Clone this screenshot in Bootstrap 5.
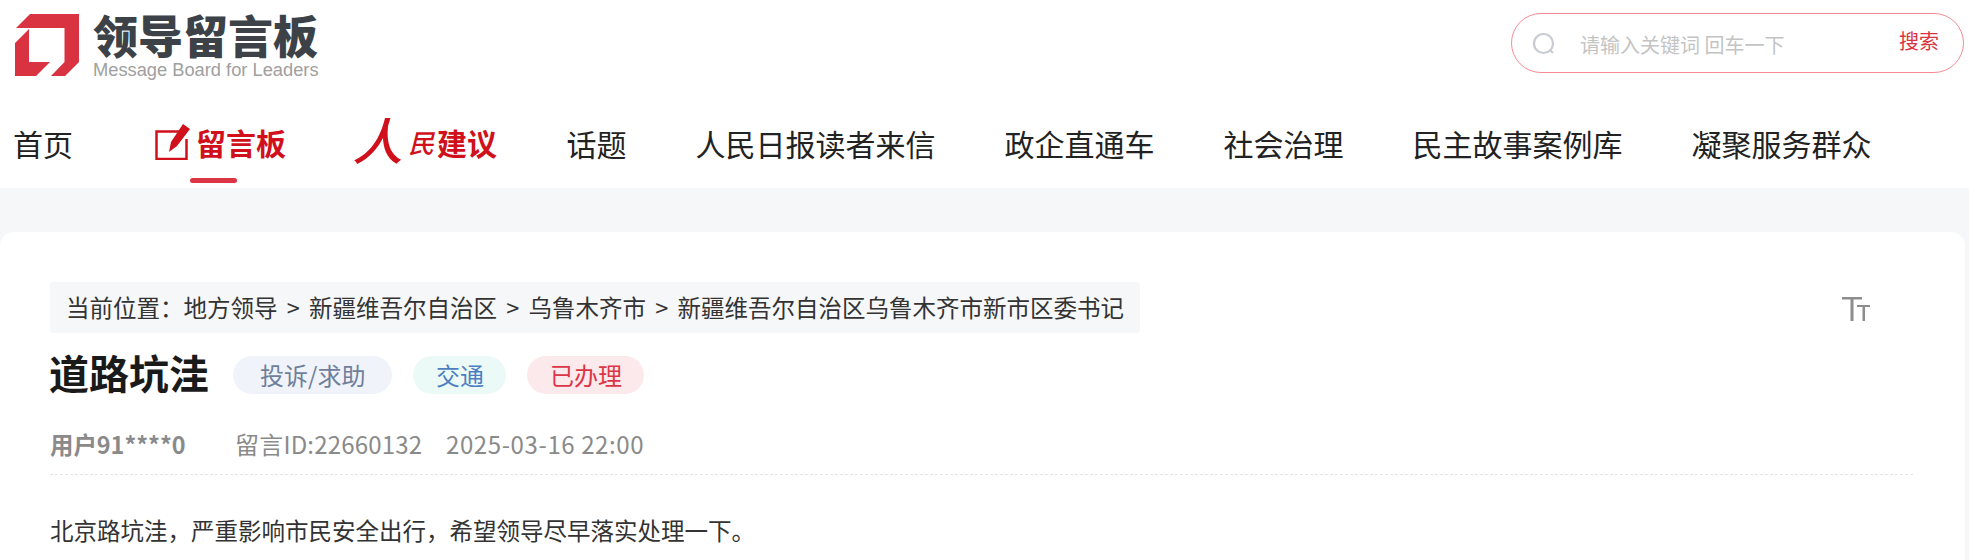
<!DOCTYPE html>
<html lang="zh"><head><meta charset="utf-8">
<link href="https://cdn.jsdelivr.net/npm/bootstrap@5.3.0/dist/css/bootstrap.min.css" rel="stylesheet">
<style>
html,body{height:560px;overflow:hidden}
body{background:#f6f7f9;font-family:"Noto Sans CJK SC","Liberation Sans",sans-serif;color:#222}
.top-wrap{background:#fff;height:188px}
.brand-row{height:88px;padding:14px 5px 0 15px}
.brand-icon{width:64px;height:63px;flex:none}
.brand-text{margin-left:14px;width:232px}
.brand-cn{font-size:45px;height:44px;line-height:44px;font-weight:900;color:#3d4248;margin-top:-1px;white-space:nowrap}
.brand-en{font-family:"Liberation Sans",sans-serif;font-size:18.300px;line-height:20px;color:#a0a0a0;white-space:nowrap;margin-top:3px}
.search-pill{width:453px;height:60px;margin-top:-1px;border:1px solid #f58a94;border-radius:30px;padding:0 24px 0 20px}
.search-ico{margin-top:2px}
.search-input{border:0;outline:0;background:transparent;flex:1;margin:3px 0 0 22px;font-size:20px;color:#333;min-width:0}
.search-input::placeholder{color:#c4c4c4}
.search-go{color:#d83442;font-size:20px;margin-bottom:4px}
.main-nav{gap:69px;padding:0 0 0 13px;height:100px;align-items:flex-start}
.nav-txt{font-size:30px;line-height:40px;margin-top:35px;color:#222;text-decoration:none;white-space:nowrap}
.nav-logo{width:130px;margin-top:34px;margin-left:13px;height:66px;text-decoration:none;white-space:nowrap}
.nav-lm{color:#d0111c;font-size:30px;line-height:40px;font-weight:700}
.pen-mark{width:35px;height:36px;flex:none;margin-right:6px}
.active-mark{display:block;width:47px;height:5px;border-radius:3px;background:#dc3545;margin:16px 0 0 35px}
.jy-logo{width:139.500px;height:40px;margin-left:4px}
.jy-ren{display:inline-block;font-size:50px;font-weight:500;line-height:40px;transform:skewX(-14deg);margin:0 5px 8px 0;width:48px}
.jy-min{display:inline-block;font-size:26px;font-weight:500;transform:skewX(-14deg);width:26px;flex:none}
.jy-rest{font-size:30px}
.board{background:#fff;margin:44px 4px 0 0;height:328px;border-radius:14px 14px 0 0;padding:50px 52px 0 50px}
.crumb{height:51px;line-height:51px;background:#f6f7f9;border-radius:3px;padding:0 16px;font-size:23.500px;color:#333;width:1090px;white-space:nowrap}
.crumb-sep{display:inline-block;width:31.500px;text-align:center}
.font-tool{width:32px;height:32px;margin-right:41px;margin-top:13px}
.ttl{font-size:40px;line-height:56px;font-weight:700;color:#1a1a1a;margin:0 0 0 -1px}
.tag-pill{height:38px;line-height:38px;border-radius:19px;padding:0 22.500px;font-size:24px;margin-top:6px}
.tag-a{background:#f0f3f9;color:#6f7f9b;padding:0 27px}
.tag-b{background:#ecfaf7;color:#4d7fc0}
.tag-c{background:#fbe9eb;color:#dc3545}
.ttl-row{margin-top:11px;gap:24px}
.tags{gap:21px}
.meta{margin-top:29px;font-size:24px;line-height:30px;color:#8a8a8a;padding-bottom:15px;border-bottom:1px dashed #e4e4e4;margin-right:0;white-space:nowrap}
.meta-u{font-weight:700;width:185px;font-size:23.400px}
.meta-i{width:211px;letter-spacing:.2px}
.meta-d{letter-spacing:.6px}
.msg{margin-top:38px;font-size:23.500px;line-height:34px;color:#333;white-space:nowrap}
</style></head>
<body>
<header class="top-wrap">
  <div class="brand-row d-flex justify-content-between">
    <div class="d-flex">
      <svg class="brand-icon" viewBox="0 0 64 63" aria-hidden="true"><path fill="#d93240" d="M15 0H64V48L50 62H36L49.500 48V14H1ZM0 29L14 15V48H35L21 62H0Z"/></svg>
      <div class="brand-text"><div class="brand-cn">领导留言板</div><div class="brand-en">Message Board for Leaders</div></div>
    </div>
    <div class="search-pill d-flex align-items-center">
      <svg class="search-ico" width="24" height="24" viewBox="0 0 24 24" fill="none" stroke="#c8ccd1" stroke-width="2.200" aria-hidden="true"><circle cx="11.500" cy="11.500" r="9.500"/><path d="M18 18l3 3"/></svg>
      <input class="search-input" placeholder="请输入关键词 回车一下">
      <span class="search-go">搜索</span>
    </div>
  </div>
  <nav class="main-nav d-flex">
    <a class="nav-txt" href="#">首页</a>
    <a class="nav-logo" href="#"><span class="d-flex align-items-center nav-lm"><svg class="pen-mark" viewBox="0 0 35 36" fill="none" aria-hidden="true"><path d="M25 7.500H1.500V35H31.500V15" stroke="#d0111c" stroke-width="2.500"/><path fill="#d0111c" d="M28 0L35 5L22 22L14 28L16 18Z"/></svg>留言板</span><span class="active-mark"></span></a>
    <a class="nav-logo jy-logo d-flex align-items-center" href="#"><span class="nav-lm jy-ren">人</span><span class="nav-lm jy-min">民</span><span class="nav-lm jy-rest">建议</span></a>
    <a class="nav-txt" href="#">话题</a>
    <a class="nav-txt" href="#">人民日报读者来信</a>
    <a class="nav-txt" href="#">政企直通车</a>
    <a class="nav-txt" href="#">社会治理</a>
    <a class="nav-txt" href="#">民主故事案例库</a>
    <a class="nav-txt" href="#">凝聚服务群众</a>
  </nav>
</header>
<main class="board">
  <div class="d-flex justify-content-between">
    <div class="crumb">当前位置：地方领导<span class="crumb-sep">&gt;</span>新疆维吾尔自治区<span class="crumb-sep">&gt;</span>乌鲁木齐市<span class="crumb-sep">&gt;</span>新疆维吾尔自治区乌鲁木齐市新市区委书记</div>
    <svg class="font-tool" viewBox="0 0 32 32" fill="#8d8d8d" aria-hidden="true"><path d="M2 2H22V4.500H13.500V26H10.500V4.500H2ZM17 10H30V12H25V26H22.500V12H17Z"/></svg>
  </div>
  <div class="ttl-row d-flex align-items-center">
    <h1 class="ttl">道路坑洼</h1>
    <div class="tags d-flex">
      <span class="tag-pill tag-a">投诉/求助</span>
      <span class="tag-pill tag-b">交通</span>
      <span class="tag-pill tag-c">已办理</span>
    </div>
  </div>
  <div class="meta d-flex">
    <span class="meta-u">用户91****0</span>
    <span class="meta-i">留言ID:22660132</span>
    <span class="meta-d">2025-03-16 22:00</span>
  </div>
  <p class="msg">北京路坑洼，严重影响市民安全出行，希望领导尽早落实处理一下。</p>
</main>
</body></html>
